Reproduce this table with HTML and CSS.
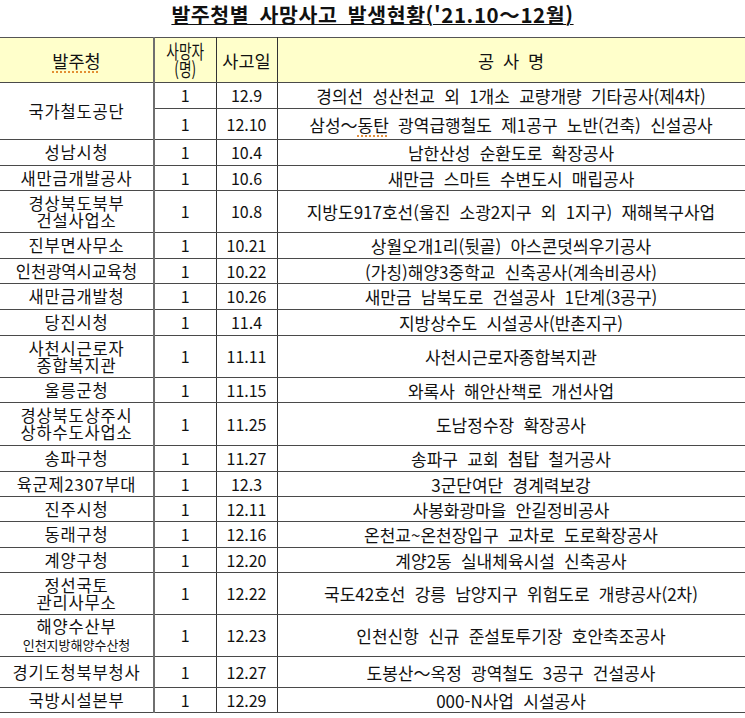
FILE: index.html
```html
<!DOCTYPE html>
<html lang="ko">
<head>
<meta charset="utf-8">
<title>발주청별 사망사고 발생현황</title>
<link rel="stylesheet" href="styles.css">
</head>
<body>
<h1 class="title">발주청별 사망사고 발생현황('21.10～12월)</h1>
<table class="tbl">
  <colgroup>
    <col class="c1"><col class="c2"><col class="c3"><col class="c4">
  </colgroup>
  <thead>
    <tr class="hd">
      <th class="sep"><span class="sq">발주청</span></th>
      <th><span class="narrow">사망자<br>(명)</span></th>
      <th>사고일</th>
      <th class="hnm">공 사 명</th>
    </tr>
  </thead>
  <tbody>
    <tr class="h26"><td class="sep org" rowspan="2">국가철도공단</td><td>1</td><td>12.9</td><td class="nm">경의선 성산천교 외 1개소  교량개량 기타공사(제4차)</td></tr>
    <tr class="h31"><td>1</td><td>12.10</td><td class="nm">삼성～<span class="sq">동탄</span> 광역급행철도 제1공구 노반(건축) 신설공사</td></tr>
    <tr class="h26"><td class="sep org">성남시청</td><td>1</td><td>10.4</td><td class="nm">남한산성 순환도로 확장공사</td></tr>
    <tr class="h25"><td class="sep org">새만금개발공사</td><td>1</td><td>10.6</td><td class="nm">새만금 스마트 수변도시 매립공사</td></tr>
    <tr class="h42"><td class="sep org two">경상북도북부<br>건설사업소</td><td>1</td><td>10.8</td><td class="nm">지방도917호선(울진 소광2지구 외   1지구) 재해복구사업</td></tr>
    <tr class="h26"><td class="sep org">진부면사무소</td><td>1</td><td>10.21</td><td class="nm">상월오개1리(뒷골) 아스콘덧씌우기공사</td></tr>
    <tr class="h25"><td class="sep org tight">인천광역시교육청</td><td>1</td><td>10.22</td><td class="nm">(가칭)해양3중학교  신축공사(계속비공사)</td></tr>
    <tr class="h26"><td class="sep org">새만금개발청</td><td>1</td><td>10.26</td><td class="nm">새만금 남북도로 건설공사 1단계(3공구)</td></tr>
    <tr class="h26"><td class="sep org">당진시청</td><td>1</td><td>11.4</td><td class="nm">지방상수도 시설공사(반촌지구)</td></tr>
    <tr class="h42"><td class="sep org two">사천시근로자<br>종합복지관</td><td>1</td><td>11.11</td><td class="nm">사천시근로자종합복지관</td></tr>
    <tr class="h25"><td class="sep org">울릉군청</td><td>1</td><td>11.15</td><td class="nm">와록사 해안산책로 개선사업</td></tr>
    <tr class="h43"><td class="sep org two">경상북도상주시<br>상하수도사업소</td><td>1</td><td>11.25</td><td class="nm">도남정수장 확장공사</td></tr>
    <tr class="h26"><td class="sep org">송파구청</td><td>1</td><td>11.27</td><td class="nm">송파구 교회 첨탑 철거공사</td></tr>
    <tr class="h25"><td class="sep org">육군제2307부대</td><td>1</td><td>12.3</td><td class="nm">3군단여단 경계력보강</td></tr>
    <tr class="h25"><td class="sep org">진주시청</td><td>1</td><td>12.11</td><td class="nm">사봉화광마을 안길정비공사</td></tr>
    <tr class="h26"><td class="sep org">동래구청</td><td>1</td><td>12.16</td><td class="nm">온천교~온천장입구 교차로 도로확장공사</td></tr>
    <tr class="h25"><td class="sep org">계양구청</td><td>1</td><td>12.20</td><td class="nm">계양2동 실내체육시설 신축공사</td></tr>
    <tr class="h42"><td class="sep org two">정선국토<br>관리사무소</td><td>1</td><td>12.22</td><td class="nm">국도42호선 강릉 남양지구 위험도로   개량공사(2차)</td></tr>
    <tr class="h42"><td class="sep org two">해양수산부<br><span class="small">인천지방해양수산청</span></td><td>1</td><td>12.23</td><td class="nm">인천신항 신규 준설토투기장 호안축조공사</td></tr>
    <tr class="h31"><td class="sep org">경기도청북부청사</td><td>1</td><td>12.27</td><td class="nm">도봉산～옥정 광역철도 3공구 건설공사</td></tr>
    <tr class="h25"><td class="sep org">국방시설본부</td><td>1</td><td>12.29</td><td class="nm">000-N사업 시설공사</td></tr>
  </tbody>
</table>
</body>
</html>
```
FILE: styles.css
```css
html, body {
  margin: 0;
  padding: 0;
  background: #ffffff;
}
body {
  font-family: "Noto Sans CJK KR", "Noto Sans", sans-serif;
  color: #111111;
  width: 745px;
}
.title {
  margin: 0;
  height: 37px;
  padding: 0;
  font-size: 20.5px;
  line-height: 29px;
  font-weight: bold;
  text-align: center;
  text-decoration: underline;
  text-underline-offset: 1px;
  text-decoration-thickness: 1px;
  word-spacing: 4px;
  letter-spacing: 0.6px;
}
.tbl {
  border-collapse: collapse;
  table-layout: fixed;
  width: 745px;
  font-size: 16px;
}
.c1 { width: 154px; }
.c2 { width: 62px; }
.c3 { width: 61px; }
.c4 { width: 468px; }
.tbl th, .tbl td {
  padding: 0;
  text-align: center;
  vertical-align: middle;
  border-top: 1px solid #4a4a4a;
  border-bottom: 1px solid #4a4a4a;
  border-right: 1px solid #333333;
  line-height: 17px;
  white-space: nowrap;
}
.tbl th.sep, .tbl td.sep {
  border-right: 2px solid #6f6f6f;
}
.tbl thead tr.hd { height: 45px; }
.tbl th {
  background: #ffffcb;
  font-weight: normal;
  font-size: 17.5px;
  border-top: 1px solid #555555;
}
.hnm {
  word-spacing: 4px;
}
.narrow {
  display: inline-block;
  font-size: 19px;
  line-height: 18px;
  transform: scaleX(0.72);
  transform-origin: center;
  margin-left: -8px;
  margin-right: -8px;
}
.sq {
  text-decoration: underline dotted #e0801e;
  text-underline-offset: 4px;
}
.org {
  font-size: 16.5px;
  letter-spacing: 0.8px;
}
.org.tight {
  letter-spacing: 0;
}
.nm {
  white-space: pre;
  font-size: 17px;
  word-spacing: 4.5px;
}
.two {
  line-height: 17px;
}
.small {
  font-size: 13px;
  letter-spacing: 0;
}
tr.h25 { height: 25px; }
tr.h26 { height: 26px; }
tr.h31 { height: 31px; }
tr.h42 { height: 42px; }
tr.h43 { height: 43px; }
```
